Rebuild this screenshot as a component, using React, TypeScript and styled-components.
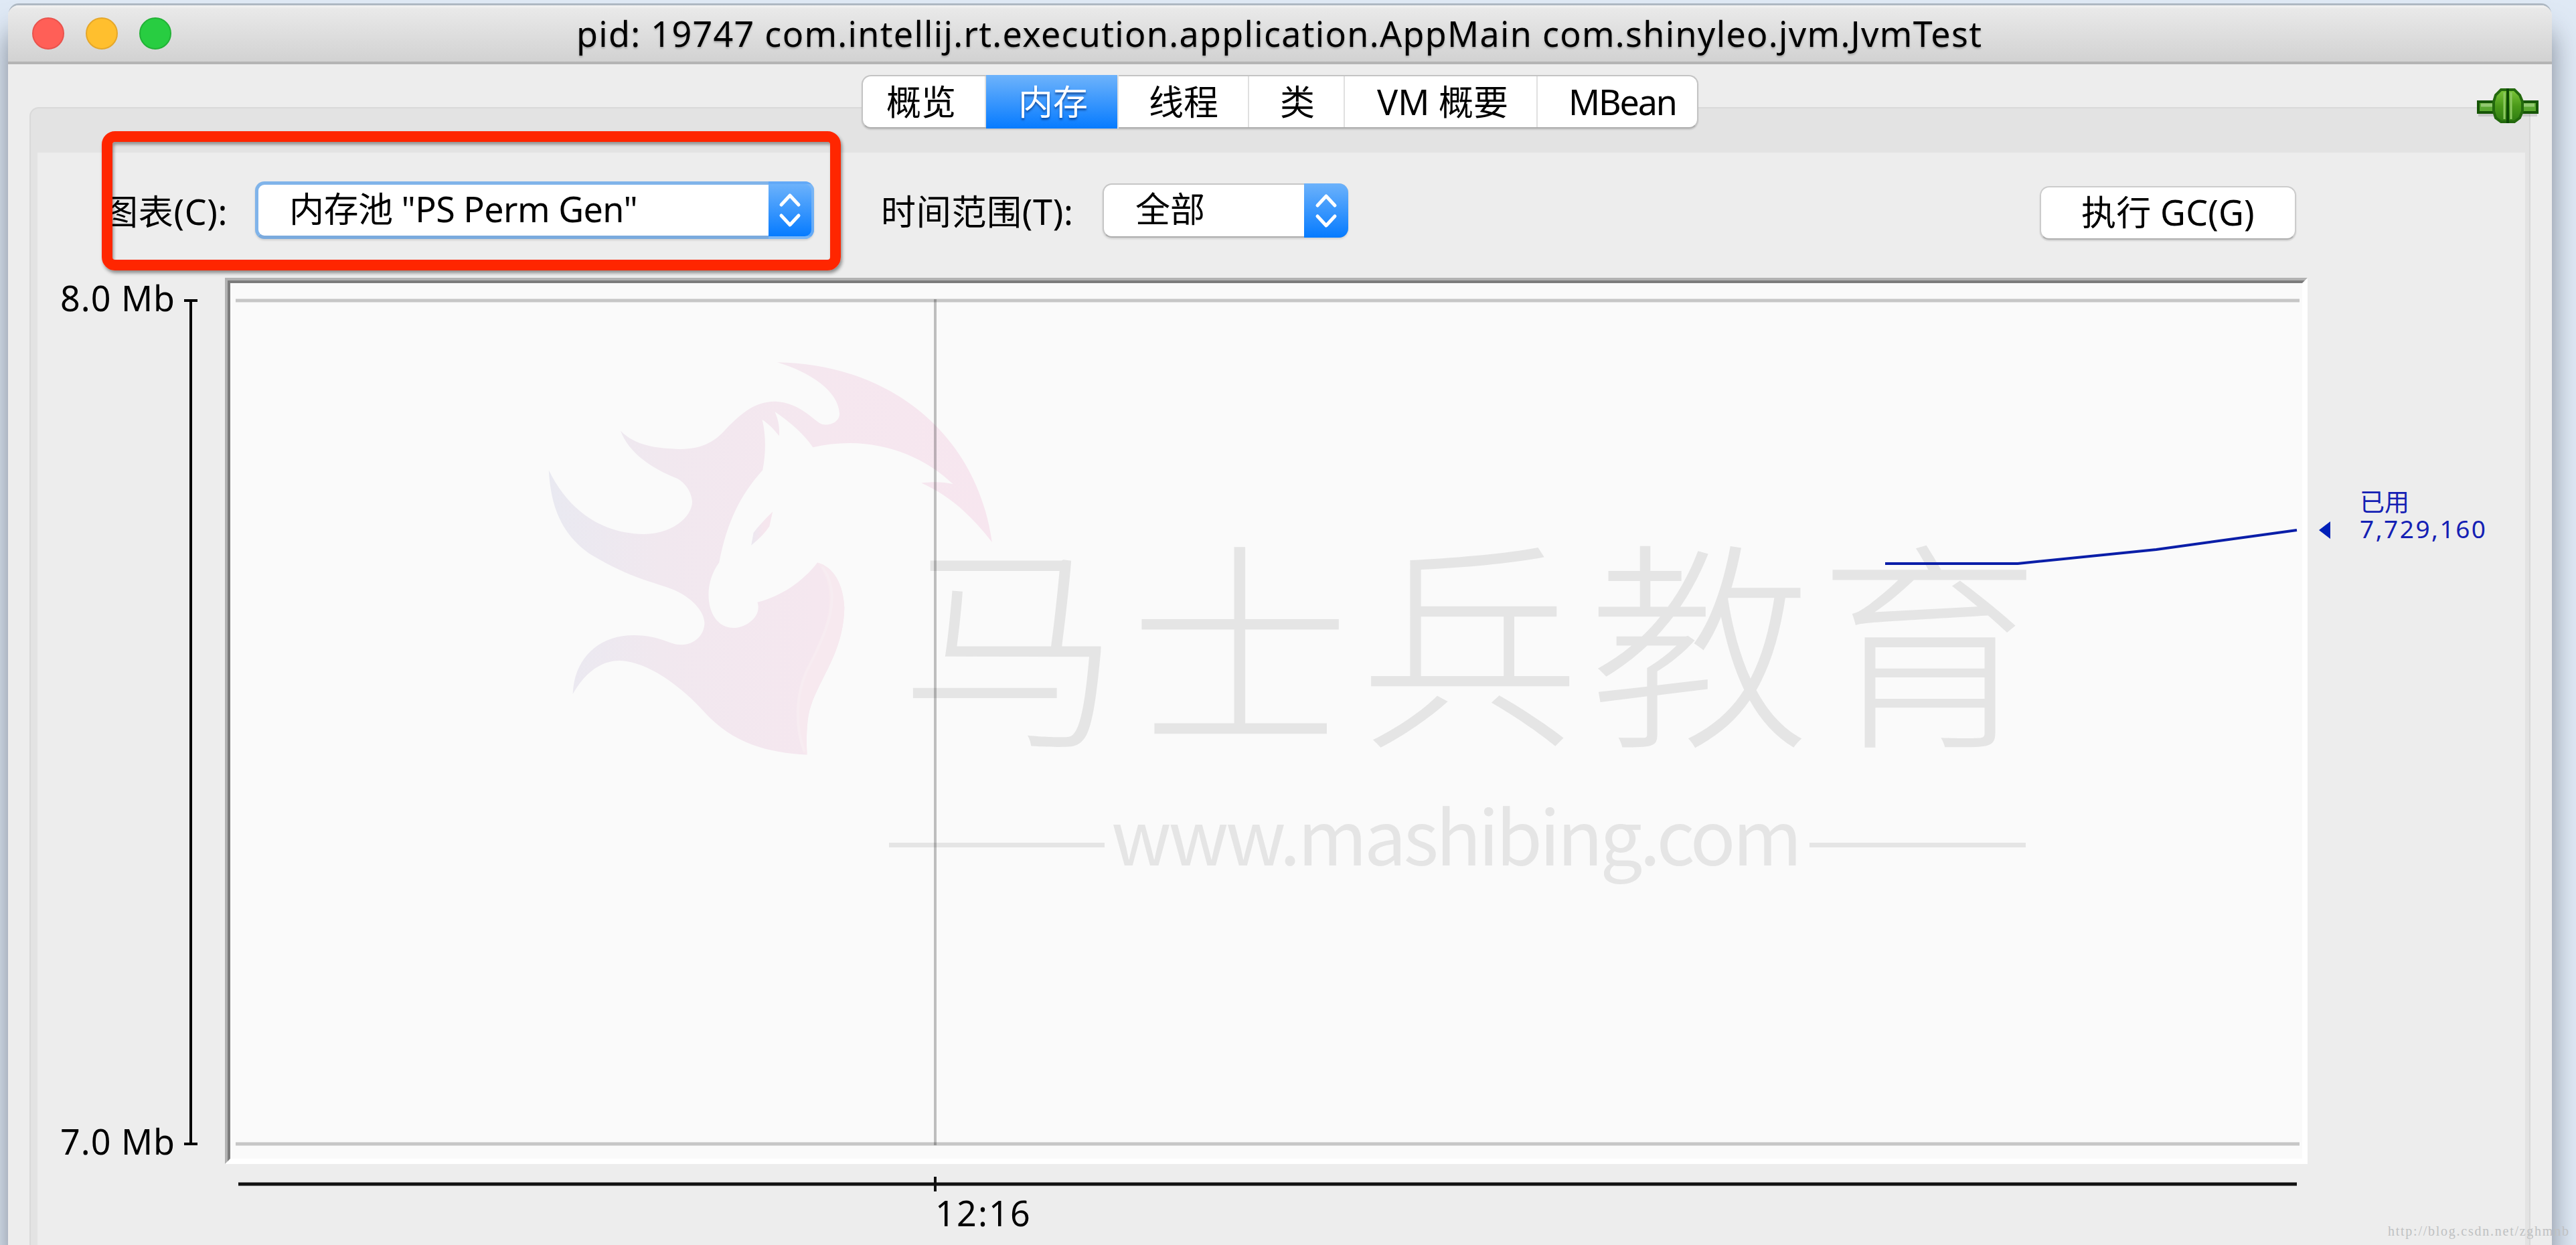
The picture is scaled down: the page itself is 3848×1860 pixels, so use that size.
import React from 'react';
import styled, { createGlobalStyle } from 'styled-components';

const ui = '"Noto Sans", "Noto Sans CJK SC", sans-serif';

const Global = createGlobalStyle`
  * { box-sizing: border-box; }
  html, body { margin: 0; padding: 0; overflow: hidden; }
  body { width: 3848px; height: 1860px; background: #dce6f2; }
`;

const Desktop = styled.div`
  position: relative;
  width: 3848px;
  height: 1860px;
  overflow: hidden;
  padding: 8px 36px 0 12px;
  background: #dfe9f5;
  font-family: ${ui};
  font-size: 52px;
  line-height: 60px;
  color: #000;
  white-space: nowrap;
`;

const Window = styled.div`
  height: 1852px;
  display: flex;
  flex-direction: column;
  background: #ededed;
  border-radius: 16px 16px 0 0;
  box-shadow: 0 -4px 0 -1px #aeb8c2, 0 40px 40px 0 rgba(60, 66, 80, 0.6);
`;

const TitleBar = styled.div`
  height: 88px;
  flex: none;
  display: flex;
  align-items: center;
  padding-left: 36px;
  border-bottom: 4px solid #b4b4b4;
  border-radius: 16px 16px 0 0;
  background: linear-gradient(#f4f4f4 0, #e9e9e9 5px, #d2d2d2 100%);
`;

const Lights = styled.div`
  display: flex;
  gap: 32px;
`;

const Light = styled.span<{ $fill: string; $edge: string }>`
  width: 48px;
  height: 48px;
  border-radius: 50%;
  background: ${p => p.$fill};
  border: 2px solid ${p => p.$edge};
`;

const Label = styled.span<{ $gap?: number; $color?: string }>`
  letter-spacing: ${p => p.$gap ?? 0}px;
  color: ${p => p.$color ?? '#000'};
`;

const Title = styled.div`
  margin-left: 605px;
  text-shadow: 0 2px 3px rgba(0, 0, 0, 0.25);
`;

const Body = styled.div`
  flex: 1;
  display: flex;
  flex-direction: column;
  padding: 16px 32px 0;
`;

const TabStrip = styled.div`
  position: relative;
  z-index: 2;
  display: flex;
  height: 80px;
  margin-left: 1243px;
`;

const Tabs = styled.div`
  display: flex;
  width: 1250px;
  background: #fff;
  border: 2px solid #c4c4c4;
  border-bottom-color: #adadad;
  border-radius: 14px;
  box-shadow: 0 2px 2px rgba(0, 0, 0, 0.12);
`;

const Tab = styled.div<{ $w: number; $pad: number; $gap?: number; $on?: boolean }>`
  width: ${p => p.$w}px;
  flex: none;
  padding-left: ${p => p.$pad}px;
  height: ${p => (p.$on ? 80 : 76)}px;
  margin-top: ${p => (p.$on ? -2 : 0)}px;
  padding-top: ${p => (p.$on ? 10 : 8)}px;
  border-right: 2px solid #e0e0e0;
  letter-spacing: ${p => p.$gap ?? 0}px;
  background: ${p => (p.$on ? 'linear-gradient(#6eb3fb, #067bff)' : 'transparent')};
  color: ${p => (p.$on ? '#fff' : '#000')};
  text-shadow: ${p => (p.$on ? '0 3px 3px rgba(0, 40, 110, 0.6)' : 'none')};
  &:last-child { border-right: 0; }
`;

const Plug = styled.svg`
  position: absolute;
  left: 2413px;
  top: 18px;
`;

const Panel = styled.div`
  flex: 1;
  margin-top: -32px;
  padding: 66px 6px 0 10px;
  background: #e3e3e3;
  border: 2px solid #d9d9d9;
  border-bottom: 0;
  border-radius: 14px 14px 0 0;
`;

const Content = styled.div`
  height: 1632px;
  background: #ededed;
`;

const Toolbar = styled.div`
  display: flex;
  height: 187px;
  padding: 44px 0 0 98px;
`;

const Field = styled.div<{ $w: number; $pad?: number }>`
  width: ${p => p.$w}px;
  padding: 14px 0 0 ${p => p.$pad ?? 0}px;
`;

const Combo = styled.div<{ $w: number; $pad: number; $focus?: boolean }>`
  display: flex;
  justify-content: space-between;
  width: ${p => p.$w}px;
  height: ${p => (p.$focus ? 86 : 81)}px;
  margin-top: ${p => (p.$focus ? -1 : 2)}px;
  padding-left: ${p => p.$pad}px;
  background: #fff;
  border: ${p => (p.$focus ? '5px solid #80b4ea' : '2px solid #c6c6c6')};
  border-bottom-color: ${p => (p.$focus ? '#7aaade' : '#adadad')};
  border-radius: 14px;
  box-shadow: 0 2px 3px rgba(0, 0, 0, 0.12);
`;

const ComboText = styled.div<{ $top: number }>`
  margin-top: ${p => p.$top}px;
`;

const Stepper = styled.div<{ $w: number; $focus?: boolean }>`
  width: ${p => p.$w}px;
  margin: ${p => (p.$focus ? '-5px' : '-2px')};
  display: flex;
  align-items: center;
  justify-content: center;
  background: linear-gradient(#6cb2fb, #067bff);
  border: solid rgba(128, 185, 245, 0.75);
  border-width: ${p => (p.$focus ? '4px 4px 4px 0' : '0')};
  border-radius: 0 14px 14px 0;
`;

const Button = styled.div`
  width: 383px;
  height: 80px;
  margin: 6px 0 0 1033px;
  padding: 7px 0 0 60px;
  background: #fff;
  border: 2px solid #cccccc;
  border-bottom-color: #b0b0b0;
  border-radius: 14px;
  box-shadow: 0 2px 2px rgba(0, 0, 0, 0.12);
`;

const RedMark = styled.div`
  position: absolute;
  left: 152px;
  top: 196px;
  width: 1104px;
  height: 208px;
  z-index: 3;
  border: 16px solid #ff2600;
  border-radius: 20px;
  box-shadow: 2px 4px 5px rgba(0, 0, 0, 0.4), inset 2px 4px 4px rgba(0, 0, 0, 0.35);
`;

const ChartRow = styled.div`
  display: flex;
  height: 1324px;
`;

const YLabels = styled.div`
  width: 219px;
  padding-left: 34px;
  display: flex;
  flex-direction: column;
  justify-content: space-between;
`;

const YLabel = styled.div`
  height: 60px;
  margin-bottom: 4px;
`;

const YAxis = styled.svg`
  display: block;
  margin-left: -10px;
  width: 71px;
  height: 1324px;
`;

const Plot = styled.div`
  width: 3111px;
  height: 1324px;
  background: #fafafa;
`;

const PlotArt = styled.svg`
  display: block;
`;

const Legend = styled.div`
  display: flex;
  padding: 315px 0 0 17px;
  font-size: 37px;
  line-height: 40px;
`;

const Pointer = styled.svg`
  display: block;
  margin-top: 2px;
`;

const LegendText = styled.div`
  display: flex;
  flex-direction: column;
  margin-left: 43px;
`;

const XAxis = styled.div`
  padding-left: 296px;
`;

const AxisArt = styled.svg`
  display: block;
`;

const TimeLabel = styled.div`
  margin: -7px 0 0 1045px;
`;

const Credit = styled.div`
  position: absolute;
  left: 3567px;
  top: 1826px;
  z-index: 4;
  font-family: "Liberation Serif", serif;
  font-size: 20px;
  line-height: 26px;
  letter-spacing: 1.75px;
  color: #bfc1c2;
`;

const Chevrons = () => (
  <svg width="34" height="52" viewBox="0 0 34 52" fill="none" stroke="#fff" strokeWidth="5" strokeLinejoin="round" strokeLinecap="round">
    <path d="M4 18L17 4L30 18M4 34L17 48L30 34" />
  </svg>
);

const Horse = () => (
  <g transform="translate(780 500) scale(0.4847 0.4337)">
    <path
      fill="url(#mane)"
      d="M786 95C1120 100 1400 330 1448 715C1390 630 1320 555 1230 511C1260 506 1300 506 1328 515C1220 400 1060 345 896 388C870 345 830 305 779 266C790 295 794 320 792 349C776 326 760 308 740 293C752 350 751 410 741 467C670 555 630 650 607 785C550 870 570 1010 652 1010C690 1010 740 970 725 922C800 900 865 850 910 785C960 800 990 860 993 940C990 1120 890 1210 880 1330C876 1370 876 1410 878 1447C760 1440 650 1410 560 1298C480 1200 380 1125 300 1123C240 1123 190 1170 156 1238C160 1120 230 1035 345 1035C430 1036 450 1068 492 1068C530 1068 562 1035 562 992C560 950 520 905 470 880C400 850 340 842 215 760C120 690 88 590 82 467C140 600 240 685 375 687C460 687 523 630 524 575C522 540 500 505 472 493C400 460 330 410 303 331C350 385 420 392 485 394C550 395 590 370 620 335C670 275 715 230 780 230C860 235 895 295 925 309C950 314 978 300 978 272C975 195 890 130 786 95Z"
    />
    <path fill="#f7e9ef" d="M910 785C960 800 990 860 993 940C990 1120 890 1210 880 1330C876 1370 876 1410 878 1447L866 1440C840 1360 835 1230 880 1140C930 1030 985 900 910 785Z" />
    <path d="M925 800C990 900 935 1030 890 1130C840 1230 840 1350 870 1436" fill="none" stroke="#f7ecf1" strokeWidth="8" />
    <path fill="url(#eye)" d="M772 610L762 660Q745 690 706 726L713 682Q735 650 772 610Z" />
  </g>
);

const App = () => (
  <>
    <Global />
    <Desktop>
      <Window>
        <TitleBar>
          <Lights>
            <Light $fill="#ff5f57" $edge="#e9534d" />
            <Light $fill="#ffbf2e" $edge="#e5a72a" />
            <Light $fill="#28cd41" $edge="#22b236" />
          </Lights>
          <Title>
            <Label $gap={1.3}>pid: 19747 com.intellij.rt.execution.application.AppMain com.shinyleo.jvm.JvmTest</Label>
          </Title>
        </TitleBar>
        <Body>
          <TabStrip>
            <Tabs>
              <Tab $w={184} $pad={35}>概览</Tab>
              <Tab $w={198} $pad={48} $on>内存</Tab>
              <Tab $w={195} $pad={45}>线程</Tab>
              <Tab $w={143} $pad={46}>类</Tab>
              <Tab $w={288} $pad={48}>VM 概要</Tab>
              <Tab $w={236} $pad={46} $gap={-2.2}>MBean</Tab>
            </Tabs>
            <Plug width="92" height="60" viewBox="0 0 92 60">
              <defs>
                <linearGradient id="ball" x1="0" y1="0" x2="0" y2="1">
                  <stop offset="0" stopColor="#7cc63a" />
                  <stop offset="0.5" stopColor="#4b9a1a" />
                  <stop offset="1" stopColor="#2f7d12" />
                </linearGradient>
              </defs>
              <path d="M2 42H90" stroke="#000" strokeOpacity="0.12" strokeWidth="4" />
              <rect x="2" y="22" width="88" height="16" fill="#5aa832" stroke="#165506" strokeWidth="4" />
              <path d="M6 27H86" stroke="#93c872" strokeWidth="5" />
              <path d="M36 4H56L64 12L68 22V36L64 46L56 52H36L28 46L25 36V22L28 12Z" fill="url(#ball)" stroke="#23690d" strokeWidth="4" />
              <path d="M41 8V48M51 8V48" stroke="#8cc860" strokeWidth="3" />
              <path d="M46 2V54" stroke="#0d4a04" strokeWidth="4" />
            </Plug>
          </TabStrip>
          <Panel>
            <Content>
              <Toolbar>
                <Field $w={227}><Label $gap={0.7}>图表(C):</Label></Field>
                <Combo $w={835} $pad={46} $focus>
                  <ComboText $top={6}><Label $gap={-0.5}>内存池 "PS Perm Gen"</Label></ComboText>
                  <Stepper $w={68} $focus><Chevrons /></Stepper>
                </Combo>
                <Field $w={431} $pad={100}><Label $gap={0.7}>时间范围(T):</Label></Field>
                <Combo $w={367} $pad={47}>
                  <ComboText $top={6}><Label>全部</Label></ComboText>
                  <Stepper $w={66}><Chevrons /></Stepper>
                </Combo>
                <Button><Label $gap={0.2}>执行 GC(G)</Label></Button>
              </Toolbar>
              <ChartRow>
                <YLabels>
                  <YLabel><Label $gap={1}>8.0 Mb</Label></YLabel>
                  <YLabel><Label $gap={1}>7.0 Mb</Label></YLabel>
                </YLabels>
                <YAxis viewBox="0 0 71 1324" stroke="#000" strokeWidth="4" fill="none">
                  <path d="M20 34V1294M10 34H30M10 1294H30" />
                </YAxis>
                <Plot>
                  <PlotArt width="3111" height="1324" viewBox="336 415 3111 1324">
                    <defs>
                      <linearGradient id="mane" x1="0" y1="0" x2="1" y2="0">
                        <stop offset="0" stopColor="#e9e9f1" />
                        <stop offset="0.25" stopColor="#f1e8ef" />
                        <stop offset="0.6" stopColor="#f5e7ef" />
                        <stop offset="1" stopColor="#f7e6ef" />
                      </linearGradient>
                      <linearGradient id="eye" x1="0" y1="0" x2="1" y2="0">
                        <stop offset="0" stopColor="#ebe8f0" />
                        <stop offset="0.6" stopColor="#f6e6ee" />
                      </linearGradient>
                    </defs>
                    <Horse />
                    <text x="1344" y="1092" fontFamily='"Noto Sans CJK SC"' fontWeight="300" fontSize="331" letterSpacing="12" fill="#e5e5e5">马士兵教育</text>
                    <text x="1660" y="1293" fontFamily='"Noto Sans CJK SC"' fontWeight="400" fontSize="112" textLength="1032" fill="#e5e5e5">www.mashibing.com</text>
                    <path d="M1328 1262.5H1650M2703 1262.5H3026" stroke="#e5e5e5" strokeWidth="7" />
                    <path d="M352 449H3435M352 1709H3435" stroke="#c6c6c6" strokeWidth="5" />
                    <path d="M1397 447V1711" stroke="#000" strokeOpacity="0.24" strokeWidth="4" />
                    <path d="M2816 842H3014L3221 821L3431 792" fill="none" stroke="#0a1ea8" strokeWidth="4" />
                    <path d="M3447 415V1739H336L344 1731H3439V423Z" fill="#fff" />
                    <path d="M336 1739V415H3447L3443 419H340V1735Z" fill="#b2b2b2" />
                    <path d="M340 1735V419H3443L3439 423H344V1731Z" fill="#7c7c7c" />
                  </PlotArt>
                </Plot>
                <Legend>
                  <Pointer width="18" height="110" viewBox="0 0 18 110"><path d="M0 60L17 47V73Z" fill="#0020b8" /></Pointer>
                  <LegendText>
                    <Label $color="#1420b4">已用</Label>
                    <Label $color="#1420b4" $gap={2.5}>7,729,160</Label>
                  </LegendText>
                </Legend>
              </ChartRow>
              <XAxis>
                <AxisArt width="3084" height="50" viewBox="352 1739 3084 50">
                  <path d="M356 1769H3431" stroke="#111" strokeWidth="5" />
                  <path d="M1397 1758V1780" stroke="#111" strokeWidth="4" />
                </AxisArt>
                <TimeLabel><Label $gap={2.2}>12:16</Label></TimeLabel>
              </XAxis>
            </Content>
          </Panel>
        </Body>
      </Window>
      <RedMark />
      <Credit>http://blog.csdn.net/zghmnb</Credit>
    </Desktop>
  </>
);

export default App;
